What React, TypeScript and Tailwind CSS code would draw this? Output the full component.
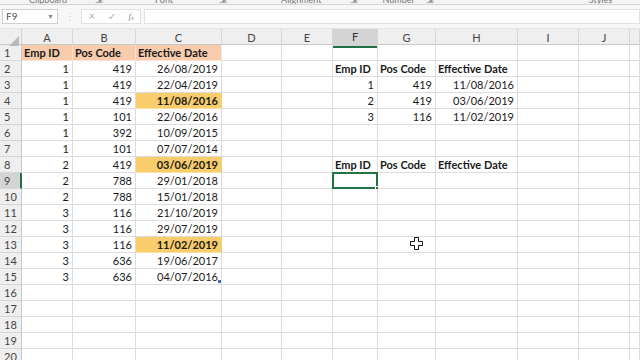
import React from "react";

type Cell = { v: string; align?: "l" | "r"; bold?: boolean; fill?: string };

const cols = ["A", "B", "C", "D", "E", "F", "G", "H", "I", "J", ""];

const left: [string, string, string, boolean?][] = [
  ["1", "419", "26/08/2019"],
  ["1", "419", "22/04/2019"],
  ["1", "419", "11/08/2016", true],
  ["1", "101", "22/06/2016"],
  ["1", "392", "10/09/2015"],
  ["1", "101", "07/07/2014"],
  ["2", "419", "03/06/2019", true],
  ["2", "788", "29/01/2018"],
  ["2", "788", "15/01/2018"],
  ["3", "116", "21/10/2019"],
  ["3", "116", "29/07/2019"],
  ["3", "116", "11/02/2019", true],
  ["3", "636", "19/06/2017"],
  ["3", "636", "04/07/2016"],
];

const right: Record<number, [string, string, string]> = {
  3: ["1", "419", "11/08/2016"],
  4: ["2", "419", "03/06/2019"],
  5: ["3", "116", "11/02/2019"],
};

function rowCells(r: number): Cell[] {
  const cells: Cell[] = Array.from({ length: 11 }, () => ({ v: "" }));
  if (r === 1) {
    cells[0] = { v: "Emp ID", align: "l", bold: true, fill: "peach" };
    cells[1] = { v: "Pos Code", align: "l", bold: true, fill: "peach" };
    cells[2] = { v: "Effective Date", align: "l", bold: true, fill: "peach" };
  } else if (r <= 15) {
    const d = left[r - 2];
    cells[0] = { v: d[0], align: "r" };
    cells[1] = { v: d[1], align: "r" };
    cells[2] = { v: d[2], align: "r", bold: !!d[3], fill: d[3] ? "gold" : undefined };
  }
  if (r === 2 || r === 8) {
    cells[5] = { v: "Emp ID", align: "l", bold: true };
    cells[6] = { v: "Pos Code", align: "l", bold: true };
    cells[7] = { v: "Effective Date", align: "l", bold: true };
  }
  if (right[r]) {
    cells[5] = { v: right[r][0], align: "r" };
    cells[6] = { v: right[r][1], align: "r" };
    cells[7] = { v: right[r][2], align: "r" };
  }
  return cells;
}

const gridCols =
  "grid grid-cols-[22px_51px_63px_86px_60px_51px_45px_58px_82px_61px_51px_1fr]";

export default function App() {
  const rows = Array.from({ length: 20 }, (_, i) => i + 1);

  return (
    <div
      className="relative w-[640px] h-[360px] overflow-hidden bg-white text-[#1a1a1a]"
      style={{ fontFamily: "Lato, 'Open Sans', sans-serif" }}
    >
      {/* ribbon group labels, cut off at top */}
      <div className="h-[5px] overflow-hidden bg-[#f3f3f3] border-b border-[#d6d6d6] flex text-[9px] text-[#777] leading-[9px]">
        <span className="-mt-[5px] ml-[29px]">Clipboard</span>
        <span className="-mt-[5px] ml-[28px]">⇲</span>
        <span className="-mt-[5px] ml-[52px]">Font</span>
        <span className="-mt-[5px] ml-[46px]">⇲</span>
        <span className="-mt-[5px] ml-[54px]">Alignment</span>
        <span className="-mt-[5px] ml-[28px]">⇲</span>
        <span className="-mt-[5px] ml-[25px]">Number</span>
        <span className="-mt-[5px] ml-[11px]">⇲</span>
        <span className="-mt-[5px] ml-[155px]">Styles</span>
      </div>

      {/* formula bar */}
      <div className="h-[23px] bg-[#f7f7f7] flex items-center pl-[2px] text-[10px] text-[#555]">
        <div className="w-[56px] h-[15px] bg-white border border-[#d0d0d0] flex items-center justify-between px-[3px]">
          <span>F9</span>
          <span className="text-[7px] text-[#888]">▼</span>
        </div>
        <span className="ml-[7px] text-[#c8c8c8] text-[10px]">⋮</span>
        <div className="ml-[6px] w-[60px] h-[15px] bg-white border border-[#e0e0e0] flex items-center justify-around text-[#b0b0b0]">
          <span className="text-[11px]">×</span>
          <span className="text-[10px]">✓</span>
          <span className="italic text-[9px] text-[#888]" style={{ fontFamily: "'Liberation Serif', serif" }}>
            f<sub className="text-[6px]">x</sub>
          </span>
        </div>
        <div className="ml-[3px] flex-1 h-[15px] bg-white border border-[#e0e0e0]" />
      </div>

      <div className="h-[1px] bg-[#e6e6e6]" />

      {/* column headers */}
      <div className={`${gridCols} h-[16px] bg-[#efefef] border-b border-[#c8c8c8] text-[11px] text-[#444]`}>
        <div className="relative border-r border-[#d0d0d0]">
          <svg className="absolute right-[2px] bottom-[2px]" width="10" height="10" viewBox="0 0 10 10">
            <polygon points="10,0 10,10 0,10" fill="#b9b9b9" />
          </svg>
        </div>
        {cols.map((c, i) => (
          <div
            key={i}
            className={`flex items-center justify-center border-r border-[#d6d6d6] ${
              c === "F" ? "bg-[#d4d4d4] border-b-2 border-b-[#217346] text-[#333]" : ""
            }`}
          >
            {c}
          </div>
        ))}
      </div>

      {/* rows */}
      {rows.map((r) => (
        <div key={r} className={`${gridCols} h-[16px] text-[11px] leading-[15px]`}>
          <div
            className={`pl-[4px] text-[#444] border-b border-[#d6d6d6] ${
              r === 9
                ? "bg-[#d4d4d4] border-r-2 border-r-[#217346]"
                : "bg-[#efefef] border-r border-r-[#c8c8c8]"
            }`}
          >
            {r}
          </div>
          {rowCells(r).map((c, i) => {
            const fill =
              c.fill === "peach"
                ? "bg-[#f8cbad] border-r-[#fbe2d2] border-b-[#fbe2d2]"
                : c.fill === "gold"
                ? "bg-[#f9cd6b] border-r-[#f9cd6b] border-b-[#fbe0a4]"
                : "border-[#dcdcdc]";
            return (
              <div
                key={i}
                className={`relative whitespace-nowrap border-r border-b ${fill} ${
                  c.align === "r" ? "text-right pr-[3px]" : "text-left pl-[2px]"
                } ${c.bold ? "font-bold" : ""}`}
              >
                {c.v}
                {r === 9 && i === 5 && (
                  <div className="absolute -left-[1px] -top-[1px] w-[46px] h-[17px] border-2 border-[#217346]">
                    <div className="absolute -right-[3px] -bottom-[3px] w-[4px] h-[4px] bg-[#217346] border border-white" />
                  </div>
                )}
                {r === 15 && i === 2 && (
                  <div className="absolute right-[0px] bottom-[1px] w-[3px] h-[3px] bg-[#4a6fb0]" />
                )}
              </div>
            );
          })}
        </div>
      ))}

      {/* mouse cursor */}
      <svg className="absolute left-[410px] top-[237px]" width="13" height="13" viewBox="0 0 13 13">
        <path
          d="M4.5 0.5h4v4h4v4h-4v4h-4v-4h-4v-4h4z"
          fill="white"
          stroke="#111"
          strokeWidth="1"
        />
      </svg>
    </div>
  );
}
